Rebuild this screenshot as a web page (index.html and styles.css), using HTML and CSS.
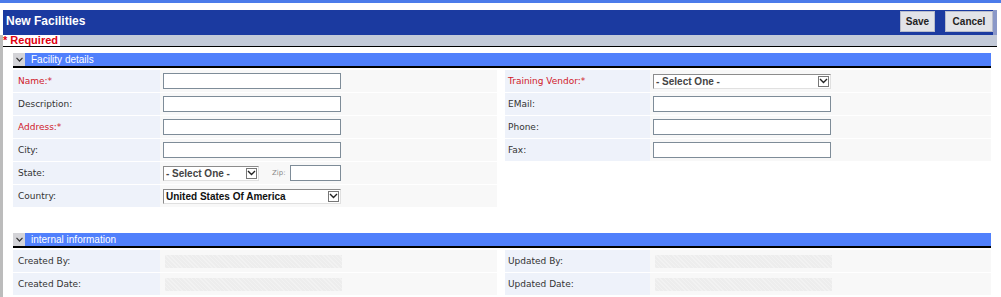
FILE: index.html
```html
<!DOCTYPE html>
<html>
<head>
    <title>New Facilities</title>
    <link rel="stylesheet" href="styles.css">
</head>
<body>
    <div class="top-strip"></div>
    <div class="title-bar">
        <span class="title">New Facilities</span>
        <div class="buttons">
            <button class="btn btn-save">Save</button>
            <button class="btn btn-cancel">Cancel</button>
        </div>
    </div>
    <div class="main">
        <div class="required-bar"><span class="required">* Required</span></div>

        <div class="section">
            <div class="section-head">
                <span class="toggle"><svg width="7" height="5" viewBox="0 0 7 5"><path d="M0.5 0.8 L3.5 4 L6.5 0.8" fill="none" stroke="#333" stroke-width="1.2"/></svg></span>
                <span class="section-title">Facility details</span>
            </div>
            <div class="section-body">
                <div class="grid grid-left">
                    <div class="lbl req">Name:*</div>
                    <div class="val"><input type="text" class="txt"></div>
                    <div class="lbl">Description:</div>
                    <div class="val"><input type="text" class="txt"></div>
                    <div class="lbl req">Address:*</div>
                    <div class="val"><input type="text" class="txt"></div>
                    <div class="lbl">City:</div>
                    <div class="val"><input type="text" class="txt"></div>
                    <div class="lbl">State:</div>
                    <div class="val">
                        <div class="select select-state">
                            <span class="sel-text light">- Select One -</span>
                            <span class="arrow"><svg width="9" height="6" viewBox="0 0 9 6"><path d="M1 1 L4.5 4.5 L8 1" fill="none" stroke="#222" stroke-width="1.4"/></svg></span>
                        </div>
                        <span class="zip-label">Zip:</span>
                        <input type="text" class="txt txt-zip">
                    </div>
                    <div class="lbl">Country:</div>
                    <div class="val">
                        <div class="select select-wide">
                            <span class="sel-text">United States Of America</span>
                            <span class="arrow"><svg width="9" height="6" viewBox="0 0 9 6"><path d="M1 1 L4.5 4.5 L8 1" fill="none" stroke="#222" stroke-width="1.4"/></svg></span>
                        </div>
                    </div>
                </div>
                <div class="grid grid-right">
                    <div class="lbl req">Training Vendor:*</div>
                    <div class="val">
                        <div class="select select-wide">
                            <span class="sel-text light">- Select One -</span>
                            <span class="arrow"><svg width="9" height="6" viewBox="0 0 9 6"><path d="M1 1 L4.5 4.5 L8 1" fill="none" stroke="#222" stroke-width="1.4"/></svg></span>
                        </div>
                    </div>
                    <div class="lbl">EMail:</div>
                    <div class="val"><input type="text" class="txt"></div>
                    <div class="lbl">Phone:</div>
                    <div class="val"><input type="text" class="txt"></div>
                    <div class="lbl">Fax:</div>
                    <div class="val"><input type="text" class="txt"></div>
                </div>
            </div>
        </div>

        <div class="section section-internal">
            <div class="section-head">
                <span class="toggle"><svg width="7" height="5" viewBox="0 0 7 5"><path d="M0.5 0.8 L3.5 4 L6.5 0.8" fill="none" stroke="#333" stroke-width="1.2"/></svg></span>
                <span class="section-title">internal information</span>
            </div>
            <div class="section-body">
                <div class="grid grid-left">
                    <div class="lbl">Created By:</div>
                    <div class="val"><span class="disabled"></span></div>
                    <div class="lbl">Created Date:</div>
                    <div class="val"><span class="disabled"></span></div>
                </div>
                <div class="grid grid-right">
                    <div class="lbl">Updated By:</div>
                    <div class="val"><span class="disabled"></span></div>
                    <div class="lbl">Updated Date:</div>
                    <div class="val"><span class="disabled"></span></div>
                </div>
            </div>
        </div>
    </div>
</body>
</html>
```

FILE: styles.css
```css
body {
    margin: 0;
    font-family: "Liberation Sans", Arial, sans-serif;
    background: #fff;
}

.top-strip {
    height: 3px;
    background-color: #4b7bea;
    margin-bottom: 7px;
}

.title-bar {
    display: flex;
    align-items: flex-start;
    justify-content: space-between;
    height: 25px;
    width: 994px;
    margin-left: 3px;
    background-color: #1b3aa0;
    border-right: 4px solid #8a98c8;
    box-sizing: border-box;
}

.title {
    color: #fff;
    font-weight: bold;
    font-size: 12px;
    line-height: 23px;
    padding-left: 3px;
}

.buttons {
    display: flex;
    gap: 10px;
    padding-top: 1px;
}

.btn {
    height: 21px;
    padding: 0;
    background-color: #e2e3e8;
    border: 1px solid #b8bccb;
    font-family: "Liberation Sans", Arial, sans-serif;
    font-weight: bold;
    font-size: 10px;
    color: #222;
}

.btn-save {
    width: 35px;
}

.btn-cancel {
    width: 48px;
}

.main {
    border-left: 3px solid #bcbcbc;
    min-height: 262px;
}

.required-bar {
    display: flex;
    align-items: center;
    height: 11px;
    background-color: #c3cad8;
    border-bottom: 1px solid #000;
    width: 994px;
}

.required {
    background-color: #fff;
    color: #e00010;
    font-weight: bold;
    font-size: 11px;
    line-height: 11px;
    padding-right: 2px;
}

.section {
    width: 978px;
    margin-left: 10px;
    margin-top: 6px;
}

.section-internal {
    margin-top: 26px;
}

.section-head {
    display: flex;
    align-items: center;
    height: 13px;
    background-color: #5080fc;
    border-bottom: 2px solid #000;
}

.toggle {
    display: flex;
    align-items: center;
    justify-content: center;
    width: 12px;
    height: 13px;
    background-color: #d4d4d8;
}

.section-title {
    color: #fff;
    font-size: 10px;
    padding-left: 6px;
}

.section-body {
    display: flex;
    align-items: flex-start;
    gap: 8px;
    padding-top: 2px;
}

.grid {
    display: grid;
    grid-auto-rows: 22px;
    row-gap: 1px;
}

.grid-left {
    grid-template-columns: 147px 337px;
}

.grid-right {
    grid-template-columns: 145px 341px;
}

.lbl {
    display: flex;
    align-items: center;
    padding-left: 5px;
    background-color: #eef2fa;
    font-family: "DejaVu Sans", Verdana, sans-serif;
    font-size: 9px;
    color: #333;
}

.lbl.req {
    color: #d0202a;
}

.grid-right .lbl {
    padding-left: 3px;
}

.val {
    display: flex;
    align-items: center;
    padding-left: 3px;
    background-color: #f8f8f8;
}

.txt {
    width: 178px;
    height: 16px;
    box-sizing: border-box;
    border: 1px solid #7e8c98;
    background: #fff;
    padding: 0;
}

.txt-zip {
    width: 51px;
}

.zip-label {
    font-family: "DejaVu Sans", Verdana, sans-serif;
    font-size: 7px;
    color: #888;
    margin-left: 13px;
    margin-right: 4px;
}

.select {
    display: flex;
    align-items: center;
    justify-content: space-between;
    height: 15px;
    box-sizing: border-box;
    border: 1px solid #8c8c8c;
    border-right-color: #e0e0e0;
    border-bottom-color: #e0e0e0;
    background: #fff;
}

.select-state {
    width: 96px;
}

.select-wide {
    width: 178px;
}

.sel-text {
    font-size: 10px;
    font-weight: bold;
    color: #111;
    padding-left: 2px;
    white-space: nowrap;
}

.sel-text.light {
    color: #444;
}

.arrow {
    display: flex;
    align-items: center;
    justify-content: center;
    width: 11px;
    height: 11px;
    box-sizing: border-box;
    border: 1px solid #777;
    margin-right: 1px;
    background: #fff;
}

.disabled {
    display: block;
    width: 177px;
    height: 13px;
    margin-left: 2px;
    background-color: #ededed;
    background-image: repeating-linear-gradient(45deg, rgba(255, 255, 255, 0.3) 0 1px, transparent 1px 3px);
}
```
